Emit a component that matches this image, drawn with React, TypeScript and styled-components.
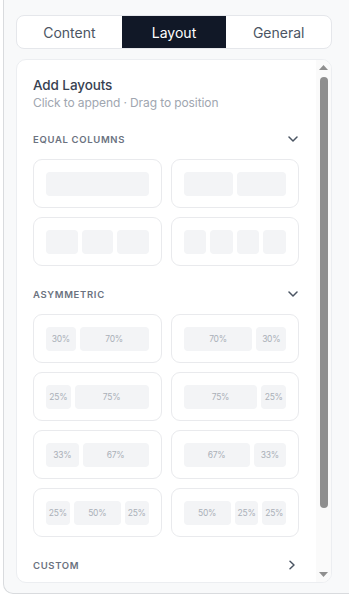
import React from "react";
import styled, { createGlobalStyle } from "styled-components";

const Global = createGlobalStyle`
  html, body { margin: 0; padding: 0; background: #ffffff; overflow: hidden; }
  body { font-family: Inter, "Noto Sans", "Liberation Sans", sans-serif; }
  * { box-sizing: border-box; }
`;

const Shell = styled.div`
  margin-left: 3px;
  width: 346px;
  height: 594px;
  background: #f8f9fa;
  border-left: 1px solid #d9dbde;
  border-bottom: 1px solid #d9dbde;
  border-bottom-left-radius: 10px;
  padding: 15px 17px 0 12px;
  display: flex;
  flex-direction: column;
  gap: 10px;
`;

const Tabs = styled.div`
  display: flex;
  height: 34px;
  background: #ffffff;
  border: 1px solid #e5e7eb;
  border-radius: 8px;
  overflow: hidden;
`;

const Tab = styled.div<{ $active?: boolean }>`
  flex: 1;
  display: flex;
  align-items: center;
  justify-content: center;
  font-size: 14px;
  color: ${(p) => (p.$active ? "#ffffff" : "#4b5563")};
  background: ${(p) => (p.$active ? "#111827" : "transparent")};
`;

const Panel = styled.div`
  height: 524px;
  width: 316px;
  background: #ffffff;
  border: 1px solid #eceef1;
  border-radius: 10px;
  overflow: hidden;
  display: flex;
`;

const Content = styled.div`
  flex: 1;
  min-width: 0;
  overflow: hidden;
  padding: 15px 17px 0 16px;
`;

const ScrollBar = styled.div`
  width: 15px;
  flex: none;
  display: flex;
  flex-direction: column;
  background: #fafafa;
`;

const ArrowBtn = styled.div`
  height: 15px;
  flex: none;
  display: flex;
  align-items: center;
  justify-content: center;
  color: #8f8f8f;
`;

const Track = styled.div`
  flex: 1;
  padding-top: 2px;
  display: flex;
  justify-content: center;
`;

const Thumb = styled.div`
  width: 8px;
  height: 431px;
  border-radius: 4px;
  background: #8f8f8f;
`;

const Title = styled.div`
  font-size: 13.5px;
  line-height: 20px;
  font-weight: 500;
  color: #374151;
  letter-spacing: -0.1px;
`;

const Subtitle = styled.div`
  font-size: 12px;
  line-height: 16px;
  letter-spacing: -0.1px;
  color: #a0a6b0;
`;

const Section = styled.div`
  margin-top: 18px;
`;

const SectionHeader = styled.div`
  display: flex;
  align-items: center;
  justify-content: space-between;
  height: 20px;
  margin-bottom: 10px;
`;

const SectionLabel = styled.span`
  font-size: 9.5px;
  font-weight: 600;
  letter-spacing: 0.07em;
  text-transform: uppercase;
  color: #6b7280;
`;

const Chevron = styled.svg<{ $inset: number }>`
  margin-right: ${(p) => p.$inset}px;
  color: #4b5563;
`;

const Grid = styled.div`
  display: grid;
  grid-template-columns: 1fr 1fr;
  gap: 9px;
`;

const Card = styled.div`
  height: 49px;
  border: 1px solid #e9eaed;
  border-radius: 9px;
  padding: 12px;
  display: flex;
  gap: 4px;
  background: #ffffff;
`;

const Bar = styled.div<{ $grow: number }>`
  flex: ${(p) => p.$grow} 1 0;
  min-width: 0;
  height: 24px;
  background: #f3f4f6;
  border-radius: 4px;
  display: flex;
  align-items: center;
  justify-content: center;
  font-size: 8.5px;
  letter-spacing: -0.03em;
  color: #aab0b8;
`;

const Down = () => (
  <Chevron $inset={1} width="10" height="6" viewBox="0 0 10 6">
    <path d="M1 1 L5 5 L9 1" fill="none" stroke="currentColor" strokeWidth="1.5" strokeLinecap="round" strokeLinejoin="round" />
  </Chevron>
);

const Right = () => (
  <Chevron $inset={3} width="8" height="10" viewBox="0 0 8 10">
    <path d="M2 1.2 L6 5 L2 8.8" fill="none" stroke="currentColor" strokeWidth="1.5" strokeLinecap="round" strokeLinejoin="round" />
  </Chevron>
);

const Triangle = ({ up }: { up?: boolean }) => (
  <svg width="9" height="5" viewBox="0 0 9 5">
    <path d={up ? "M4.5 0 L9 5 L0 5 Z" : "M0 0 L9 0 L4.5 5 Z"} fill="currentColor" />
  </svg>
);

const equal = [[1], [1, 1], [1, 1, 1], [1, 1, 1, 1]];
const asym = [
  [30, 70],
  [70, 30],
  [25, 75],
  [75, 25],
  [33, 67],
  [67, 33],
  [25, 50, 25],
  [50, 25, 25],
];

export default function App() {
  return (
    <>
      <Global />
      <Shell>
        <Tabs>
          <Tab>Content</Tab>
          <Tab $active>Layout</Tab>
          <Tab>General</Tab>
        </Tabs>
        <Panel>
          <Content>
            <Title>Add Layouts</Title>
            <Subtitle>Click to append · Drag to position</Subtitle>
            <Section>
              <SectionHeader>
                <SectionLabel>Equal Columns</SectionLabel>
                <Down />
              </SectionHeader>
              <Grid>
                {equal.map((cols, i) => (
                  <Card key={i}>
                    {cols.map((c, j) => (
                      <Bar key={j} $grow={c} />
                    ))}
                  </Card>
                ))}
              </Grid>
            </Section>
            <Section>
              <SectionHeader>
                <SectionLabel>Asymmetric</SectionLabel>
                <Down />
              </SectionHeader>
              <Grid>
                {asym.map((cols, i) => (
                  <Card key={i}>
                    {cols.map((c, j) => (
                      <Bar key={j} $grow={c}>
                        {c}%
                      </Bar>
                    ))}
                  </Card>
                ))}
              </Grid>
            </Section>
            <Section>
              <SectionHeader>
                <SectionLabel>Custom</SectionLabel>
                <Right />
              </SectionHeader>
            </Section>
          </Content>
          <ScrollBar>
            <ArrowBtn>
              <Triangle up />
            </ArrowBtn>
            <Track>
              <Thumb />
            </Track>
            <ArrowBtn>
              <Triangle />
            </ArrowBtn>
          </ScrollBar>
        </Panel>
      </Shell>
    </>
  );
}
